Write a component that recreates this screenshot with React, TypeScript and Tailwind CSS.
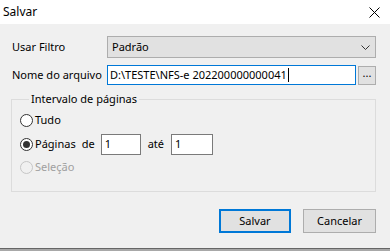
import { useState } from 'react'

function Radio({ checked, disabled }: { checked?: boolean; disabled?: boolean }) {
  return (
    <span
      className={`flex h-[13px] w-[13px] items-center justify-center rounded-full border ${
        disabled ? 'border-[#c6c6c6] bg-[#f0f0f0]' : 'border-[#333333] bg-white'
      }`}
    >
      {checked && <span className="h-[7px] w-[7px] rounded-full bg-[#333333]" />}
    </span>
  )
}

export default function App() {
  const [fileName] = useState('D:\\TESTE\\NFS-e 202200000000041')

  return (
    <div
      className="flex h-[251px] w-[390px] flex-col bg-[#f0f0f0] text-[11px] text-black"
      style={{ fontFamily: '"Noto Sans", "Liberation Sans", sans-serif' }}
    >
      {/* Title bar */}
      <div className="flex h-[24px] items-center justify-between bg-white pl-[3px] pr-[10px]">
        <span className="text-[12px]">Salvar</span>
        <svg width="11" height="11" viewBox="0 0 11 11">
          <path d="M0.5 0.5 L10.5 10.5 M10.5 0.5 L0.5 10.5" stroke="#000" strokeWidth="1" />
        </svg>
      </div>

      <div className="flex flex-1 flex-col pl-[11px] pr-[14px]">
        {/* Usar Filtro */}
        <div className="mt-[12px] flex h-[22px] items-center">
          <span className="w-[96px] pl-[1px]">Usar Filtro</span>
          <div className="flex h-full flex-1 items-center justify-between border border-[#adadad] bg-[#e1e1e1] pl-[4px] pr-[5px]">
            <span>Padrão</span>
            <svg width="9" height="5" viewBox="0 0 9 5">
              <path d="M0.5 0.5 L4.5 4.5 L8.5 0.5" stroke="#333" strokeWidth="1" fill="none" />
            </svg>
          </div>
        </div>

        {/* Nome do arquivo */}
        <div className="mt-[7px] flex h-[20px] items-center">
          <span className="w-[96px] pl-[1px]">Nome do arquivo</span>
          <div className="flex h-full flex-1 items-center border border-[#0078d7] bg-white pl-[2px]">
            <span className="whitespace-pre">{fileName}</span>
            <span className="ml-[1px] h-[14px] w-[1px] bg-black" />
          </div>
          <button className="ml-[2px] flex h-[19px] w-[18px] items-center justify-center border border-[#adadad] bg-[#e1e1e1] pb-[3px]">
            ...
          </button>
        </div>

        {/* Intervalo de páginas */}
        <fieldset className="mt-[6px] h-[101px] border border-[#dcdcdc] pl-[8px] pr-[8px]">
          <legend className="ml-[9px] px-[2px] leading-[16px]">Intervalo de páginas</legend>
          <div className="mt-[5px] flex h-[16px] items-center gap-[2px]">
            <Radio />
            <span>Tudo</span>
          </div>
          <div className="mt-[6px] flex h-[21px] items-center">
            <Radio checked />
            <span className="ml-[2px]">Páginas</span>
            <span className="ml-[6px]">de</span>
            <div className="ml-[6px] flex h-[21px] w-[40px] items-center border border-[#7a7a7a] bg-white pl-[3px]">1</div>
            <span className="ml-[7px]">até</span>
            <div className="ml-[7px] flex h-[21px] w-[42px] items-center border border-[#7a7a7a] bg-white pl-[3px]">1</div>
          </div>
          <div className="mt-[4px] flex h-[16px] items-center gap-[2px] text-[#a0a0a0]">
            <Radio disabled />
            <span>Seleção</span>
          </div>
        </fieldset>

        {/* Buttons */}
        <div className="mt-[17px] flex justify-end gap-[12px]">
          <button className="flex h-[24px] w-[72px] items-center justify-center border-2 border-[#0078d7] bg-[#e1e1e1]">
            Salvar
          </button>
          <button className="flex h-[24px] w-[73px] items-center justify-center border border-[#adadad] bg-[#e1e1e1]">
            Cancelar
          </button>
        </div>
      </div>

      <div className="h-[1px] bg-[#666666]" />
      <div className="h-[2px] bg-[#a8a8a8]" />
    </div>
  )
}
